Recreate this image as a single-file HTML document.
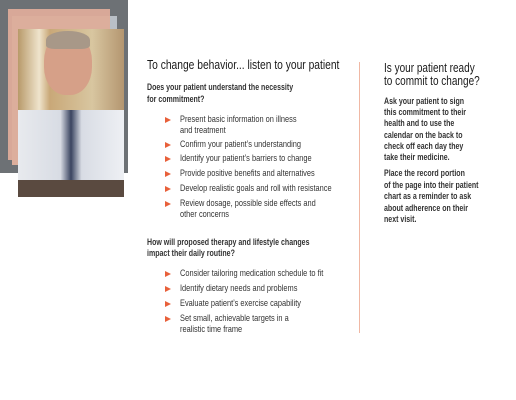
<!DOCTYPE html>
<html><head><meta charset="utf-8"><style>
html,body{margin:0;padding:0;background:#fff;width:516px;height:400px;overflow:hidden;position:relative;font-family:"Liberation Sans",sans-serif;color:#222}
.a{position:absolute;white-space:nowrap;transform-origin:0 0}
.h{font-size:13px;color:#1a1a1a;transform:scaleX(0.79)}
.q{font-size:9.5px;font-weight:bold;color:#333;transform:scaleX(0.74)}
.b{font-size:9.5px;color:#333;transform:scaleX(0.78)}
.p{font-size:9.5px;font-weight:bold;color:#333;transform:scaleX(0.74)}
.h2{font-size:13px;color:#1a1a1a;transform:scaleX(0.77)}
.ar{position:absolute;width:0;height:0;border-left:6px solid #e8603a;border-top:3px solid transparent;border-bottom:3px solid transparent}
</style></head><body>
<div class="a" style="left:0;top:0;width:128px;height:173px;background:#6d7175"></div>
<div class="a" style="left:8px;top:9px;width:102px;height:151px;background:#d8a898"></div>
<div class="a" style="left:12px;top:16px;width:105px;height:149px;background:#b9bfc6"></div>
<div class="a" style="left:12px;top:16px;width:98px;height:149px;background:#dcae9c"></div>
<div class="a" style="left:18px;top:29px;width:106px;height:168px;background:linear-gradient(90deg,#b89a6a 0%,#efe4cc 20%,#c9a878 30%,#d8c6a0 70%,#b49670 100%)"></div>
<div class="a" style="left:18px;top:110px;width:106px;height:87px;background:linear-gradient(90deg,#e8eaee,#d8dce4 40%,#3a4460 50%,#d8dce4 60%,#eef0f4)"></div>
<div class="a" style="left:44px;top:33px;width:48px;height:62px;border-radius:45%;background:#d6a088"></div>
<div class="a" style="left:46px;top:31px;width:44px;height:18px;border-radius:50% 50% 20% 20%;background:#a89888"></div>
<div class="a" style="left:18px;top:180px;width:106px;height:17px;background:#5a4a40"></div>

<div class="a h" style="left:147px;top:57px">To change behavior... listen to your patient</div>
<div class="a q" style="left:147px;top:82px">Does your patient understand the necessity</div>
<div class="a q" style="left:147px;top:94px">for commitment?</div>

<div class="ar" style="left:165px;top:117px"></div>
<div class="a b" style="left:180px;top:114px">Present basic information on illness</div>
<div class="a b" style="left:180px;top:125px">and treatment</div>
<div class="ar" style="left:165px;top:142px"></div>
<div class="a b" style="left:180px;top:139px">Confirm your patient’s understanding</div>
<div class="ar" style="left:165px;top:156px"></div>
<div class="a b" style="left:180px;top:153px">Identify your patient’s barriers to change</div>
<div class="ar" style="left:165px;top:171px"></div>
<div class="a b" style="left:180px;top:168px">Provide positive benefits and alternatives</div>
<div class="ar" style="left:165px;top:186px"></div>
<div class="a b" style="left:180px;top:183px">Develop realistic goals and roll with resistance</div>
<div class="ar" style="left:165px;top:201px"></div>
<div class="a b" style="left:180px;top:198px">Review dosage, possible side effects and</div>
<div class="a b" style="left:180px;top:209px">other concerns</div>

<div class="a q" style="left:147px;top:237px">How will proposed therapy and lifestyle changes</div>
<div class="a q" style="left:147px;top:248px">impact their daily routine?</div>

<div class="ar" style="left:165px;top:271px"></div>
<div class="a b" style="left:180px;top:268px">Consider tailoring medication schedule to fit</div>
<div class="ar" style="left:165px;top:286px"></div>
<div class="a b" style="left:180px;top:283px">Identify dietary needs and problems</div>
<div class="ar" style="left:165px;top:301px"></div>
<div class="a b" style="left:180px;top:298px">Evaluate patient’s exercise capability</div>
<div class="ar" style="left:165px;top:316px"></div>
<div class="a b" style="left:180px;top:313px">Set small, achievable targets in a</div>
<div class="a b" style="left:180px;top:324px">realistic time frame</div>

<div class="a" style="left:359px;top:62px;width:1px;height:271px;background:#f0b8a4"></div>

<div class="a h2" style="left:384px;top:60px">Is your patient ready</div>
<div class="a h2" style="left:384px;top:73px">to commit to change?</div>
<div class="a p" style="left:384px;top:96px">Ask your patient to sign</div>
<div class="a p" style="left:384px;top:107px">this commitment to their</div>
<div class="a p" style="left:384px;top:118px">health and to use the</div>
<div class="a p" style="left:384px;top:130px">calendar on the back to</div>
<div class="a p" style="left:384px;top:141px">check off each day they</div>
<div class="a p" style="left:384px;top:152px">take their medicine.</div>
<div class="a p" style="left:384px;top:168px">Place the record portion</div>
<div class="a p" style="left:384px;top:180px">of the page into their patient</div>
<div class="a p" style="left:384px;top:191px">chart as a reminder to ask</div>
<div class="a p" style="left:384px;top:203px">about adherence on their</div>
<div class="a p" style="left:384px;top:214px">next visit.</div>
</body></html>
